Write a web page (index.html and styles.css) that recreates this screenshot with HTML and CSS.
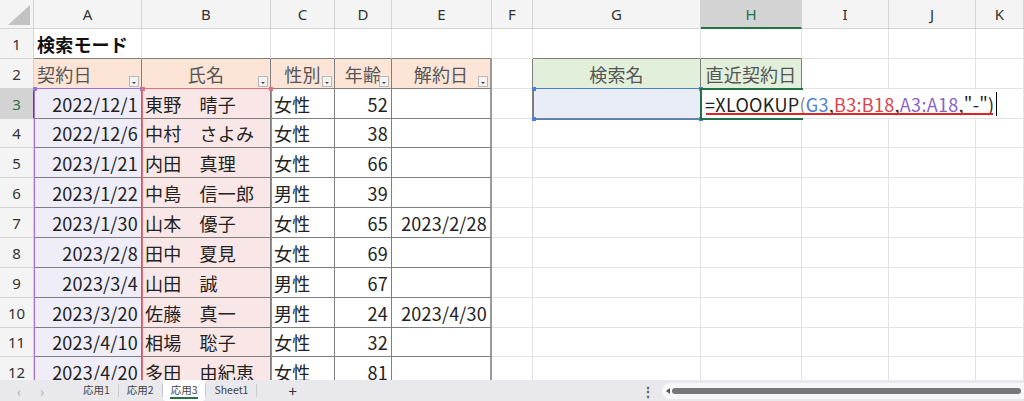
FILE: index.html
```html
<!DOCTYPE html>
<html lang="ja">
<head>
<meta charset="utf-8">
<title>検索モード</title>
<link rel="stylesheet" href="styles.css">
</head>
<body>
<div class="sheet">
  <div class="row hdr">
    <div class="c corner"><svg class="corner-tri" width="26" height="24" viewBox="0 0 26 24"><polygon points="2,22 24,22 24,2" fill="#c2c2c2"/></svg></div>
    <div class="c ch">A</div><div class="c ch">B</div><div class="c ch">C</div><div class="c ch">D</div><div class="c ch">E</div><div class="c ch">F</div><div class="c ch">G</div><div class="c ch sel">H</div><div class="c ch">I</div><div class="c ch">J</div><div class="c ch">K</div>
  </div>
  <div class="row">
    <div class="c rh">1</div>
    <div class="c tt title">検索モード</div><div class="c tt"></div><div class="c tt"></div><div class="c tt"></div><div class="c tt"></div><div class="c"></div><div class="c tt"></div><div class="c tt"></div><div class="c"></div><div class="c"></div><div class="c"></div>
  </div>
  <div class="row">
    <div class="c rh">2</div>
    <div class="c t hd">契約日<span class="dd"></span></div>
    <div class="c t hd ctr">氏名<span class="dd"></span></div>
    <div class="c t hd ctr">性別<span class="dd"></span></div>
    <div class="c t hd ctr">年齢<span class="dd"></span></div>
    <div class="c t hd ctr eR">解約日<span class="dd"></span></div>
    <div class="c tl"></div>
    <div class="c t gg ctr">検索名</div>
    <div class="c t gg ctr">直近契約日</div>
    <div class="c"></div><div class="c"></div><div class="c"></div>
  </div>
  <div class="row">
    <div class="c rh sel">3</div>
    <div class="c t ga r">2022/12/1</div><div class="c t gb">東野　晴子</div><div class="c t">女性</div><div class="c t r">52</div><div class="c t eR"></div>
    <div class="c tl"></div><div class="c t gblue"></div><div class="c t"></div><div class="c"></div><div class="c"></div><div class="c"></div>
  </div>
  <div class="row h29">
    <div class="c rh">4</div>
    <div class="c t ga r">2022/12/6</div><div class="c t gb">中村　さよみ</div><div class="c t">女性</div><div class="c t r">38</div><div class="c t eR"></div>
    <div class="c"></div><div class="c"></div><div class="c"></div><div class="c"></div><div class="c"></div><div class="c"></div>
  </div>
  <div class="row">
    <div class="c rh">5</div>
    <div class="c t ga r">2023/1/21</div><div class="c t gb">内田　真理</div><div class="c t">女性</div><div class="c t r">66</div><div class="c t eR"></div>
    <div class="c"></div><div class="c"></div><div class="c"></div><div class="c"></div><div class="c"></div><div class="c"></div>
  </div>
  <div class="row">
    <div class="c rh">6</div>
    <div class="c t ga r">2023/1/22</div><div class="c t gb">中島　信一郎</div><div class="c t">男性</div><div class="c t r">39</div><div class="c t eR"></div>
    <div class="c"></div><div class="c"></div><div class="c"></div><div class="c"></div><div class="c"></div><div class="c"></div>
  </div>
  <div class="row">
    <div class="c rh">7</div>
    <div class="c t ga r">2023/1/30</div><div class="c t gb">山本　優子</div><div class="c t">女性</div><div class="c t r">65</div><div class="c t r eR">2023/2/28</div>
    <div class="c"></div><div class="c"></div><div class="c"></div><div class="c"></div><div class="c"></div><div class="c"></div>
  </div>
  <div class="row">
    <div class="c rh">8</div>
    <div class="c t ga r">2023/2/8</div><div class="c t gb">田中　夏見</div><div class="c t">女性</div><div class="c t r">69</div><div class="c t eR"></div>
    <div class="c"></div><div class="c"></div><div class="c"></div><div class="c"></div><div class="c"></div><div class="c"></div>
  </div>
  <div class="row">
    <div class="c rh">9</div>
    <div class="c t ga r">2023/3/4</div><div class="c t gb">山田　誠</div><div class="c t">男性</div><div class="c t r">67</div><div class="c t eR"></div>
    <div class="c"></div><div class="c"></div><div class="c"></div><div class="c"></div><div class="c"></div><div class="c"></div>
  </div>
  <div class="row">
    <div class="c rh">10</div>
    <div class="c t ga r">2023/3/20</div><div class="c t gb">佐藤　真一</div><div class="c t">男性</div><div class="c t r">24</div><div class="c t r eR">2023/4/30</div>
    <div class="c"></div><div class="c"></div><div class="c"></div><div class="c"></div><div class="c"></div><div class="c"></div>
  </div>
  <div class="row h29">
    <div class="c rh">11</div>
    <div class="c t ga r">2023/4/10</div><div class="c t gb">相場　聡子</div><div class="c t">女性</div><div class="c t r">32</div><div class="c t eR"></div>
    <div class="c"></div><div class="c"></div><div class="c"></div><div class="c"></div><div class="c"></div><div class="c"></div>
  </div>
  <div class="row">
    <div class="c rh">12</div>
    <div class="c t ga r">2023/4/20</div><div class="c t gb">多田　由紀恵</div><div class="c t">女性</div><div class="c t r">81</div><div class="c t eR"></div>
    <div class="c"></div><div class="c"></div><div class="c"></div><div class="c"></div><div class="c"></div><div class="c"></div>
  </div>

  <div class="rng rng-a"><i class="k tl-k"></i><i class="k tr-k"></i></div>
  <div class="rng rng-b"><i class="k tl-k"></i><i class="k tr-k"></i></div>
  <div class="rng rng-g"><i class="k tl-k"></i><i class="k tr-k"></i><i class="k bl-k"></i><i class="k br-k"></i></div>
  <div class="active-cell"></div>
  <div class="editor">
    <span>=XLOOKUP</span><span class="f-paren">(</span><span class="f-b">G3</span><span>,</span><span class="f-r">B3:B18</span><span>,</span><span class="f-p">A3:A18</span><span>,"-")</span><span class="caret"></span>
    <span class="uline"></span>
  </div>
</div>
<div class="tabbar">
  <div class="nav"><span class="arr">&lsaquo;</span><span class="arr">&rsaquo;</span></div>
  <div class="tab">応用1</div><span class="sep"></span>
  <div class="tab">応用2</div><span class="sep"></span>
  <div class="tab active">応用3</div><span class="sep"></span>
  <div class="tab">Sheet1</div><span class="sep"></span>
  <div class="plus">+</div>
  <div class="more">⋮</div>
  <div class="scroll"><span class="sarrow"></span><span class="thumb"></span></div>
</div>
</body>
</html>
```
FILE: styles.css
```css
* { box-sizing: border-box; margin: 0; padding: 0; }
body {
  margin: 0;
  width: 1024px;
  height: 401px;
  overflow: hidden;
  background: #fff;
  color: #222;
  font-family: "Noto Sans CJK JP", "Noto Sans", sans-serif;
}
.sheet { position: relative; height: 380px; overflow: hidden; }
.row {
  display: grid;
  grid-template-columns: 34px 108px 129px 64px 57px 100px 41px 168px 101px 87px 87px 48px;
  height: 30px;
}
.row.hdr, .row.h29 { height: 29px; }
.c {
  position: relative;
  display: flex;
  align-items: center;
  min-width: 0;
  padding: 0 3px;
  font-size: 18px;
  letter-spacing: 0.2px;
  white-space: nowrap;
  border-right: 1px solid #e3e3e3;
  border-bottom: 1px solid #e3e3e3;
}
.corner { background: #f4f4f4; border-color: #d4d4d4; padding: 0; }
.corner-tri { position: absolute; right: 1px; bottom: 1px; }
.ch {
  justify-content: center;
  background: #f4f4f4;
  border-color: #d4d4d4;
  font-family: "Noto Sans", sans-serif;
  font-size: 15px;
  letter-spacing: 0;
  color: #333;
}
.ch.sel { background: #d3d3d3; color: #217346; border-bottom: 2px solid #217346; }
.rh {
  justify-content: center;
  padding: 0;
  background: #f4f4f4;
  border-color: #d4d4d4;
  font-family: "Noto Sans", sans-serif;
  font-size: 15px;
  letter-spacing: 0;
  color: #333;
}
.rh.sel { background: #d3d3d3; color: #217346; border-right: 1px solid #217346; }
.r { justify-content: flex-end; }
.ctr { justify-content: center; }
.t { border-right-color: #7f7f7f; border-bottom-color: #7f7f7f; }
.tt { border-bottom-color: #7f7f7f; }
.tl { border-right-color: #7f7f7f; }
.eR { border-right: 2px solid #9a9a9a; }
.hd { background: #fce4d6; color: #555; }
.ga { background: #efedf8; }
.gb { background: #f9e7e7; }
.gg { background: #e2efda; color: #555; }
.gblue { background: #e8edf8; }
.title { font-weight: 700; overflow: visible; color: #111; }
.dd {
  position: absolute;
  right: 2px;
  bottom: 1px;
  width: 10px;
  height: 11px;
  background: #f3f3f3;
  border: 1px solid #b8b8b8;
}
.dd::after {
  content: "";
  position: absolute;
  left: 2px;
  top: 5px;
  border-left: 2px solid transparent;
  border-right: 2px solid transparent;
  border-top: 2px solid #444;
}

.rng { position: absolute; border: 1px solid; pointer-events: none; }
.rng-a { left: 34px; top: 88px; width: 109px; height: 400px; border-color: #9b72d6; color: #9b72d6; }
.rng-b { left: 142px; top: 88px; width: 130px; height: 400px; border-color: #e0707a; color: #e0707a; }
.rng-g { left: 533px; top: 88px; width: 169px; height: 32px; border-color: #4a7fd4; color: #4a7fd4; }
.k { position: absolute; width: 4px; height: 4px; background: currentColor; }
.tl-k { left: -2px; top: -2px; }
.tr-k { right: -2px; top: -2px; }
.bl-k { left: -2px; bottom: -2px; }
.br-k { right: -2px; bottom: -2px; }
.active-cell {
  position: absolute;
  left: 700px;
  top: 88px;
  width: 103px;
  height: 32px;
  border: 2px solid #217346;
}
.editor {
  position: absolute;
  left: 702px;
  top: 90px;
  width: 298px;
  height: 28px;
  display: flex;
  align-items: center;
  padding-left: 3px;
  background: #fff;
  font-size: 18px;
  letter-spacing: 0.3px;
  color: #222;
  white-space: nowrap;
}
.f-paren { color: #8a8a8a; }
.f-b { color: #4a7fd4; }
.f-r { color: #d9434a; }
.f-p { color: #8a63c8; }
.caret { display: inline-block; width: 1px; height: 24px; background: #000; margin-left: 2px; }
.uline { position: absolute; left: 4px; top: 23px; width: 287px; height: 2px; background: #e02424; }

.tabbar {
  position: relative;
  display: flex;
  align-items: center;
  height: 21px;
  background: #e8e8ed;
  font-size: 10.5px;
  line-height: 1;
  color: #444;
}
.nav { display: flex; width: 75px; padding-left: 15px; gap: 15px; }
.arr { color: #a8a8a8; font-size: 14px; width: 8px; text-align: center; }
.tab { height: 21px; padding: 0 8px; display: flex; align-items: center; }
.tab.active { position: relative; background: #fff; border-radius: 0 0 3px 3px; }
.tab.active::after {
  content: "";
  position: absolute;
  left: 7px;
  right: 7px;
  bottom: 2px;
  height: 2px;
  background: #217346;
}
.sep { width: 1px; height: 13px; background: #c9c9cf; }
.plus { margin-left: 31px; font-size: 15px; line-height: 1; color: #333; }
.more { margin-left: auto; margin-right: 8px; color: #555; font-size: 12px; font-weight: 700; }
.scroll {
  position: relative;
  width: 362px;
  height: 16px;
  background: #f7f7f9;
  border-radius: 8px 0 0 8px;
  display: flex;
  align-items: center;
}
.sarrow {
  margin-left: 4px;
  border-top: 3px solid transparent;
  border-bottom: 3px solid transparent;
  border-right: 4px solid #555;
}
.thumb { margin-left: 2px; flex: 1; height: 6px; margin-right: 3px; background: #777; border-radius: 3px; }
```
